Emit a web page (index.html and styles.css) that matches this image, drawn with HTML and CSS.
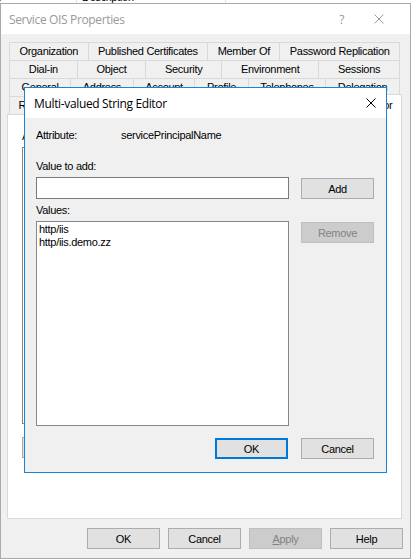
FILE: index.html
```html
<!DOCTYPE html>
<html>
<head>
    <title>Service OIS Properties</title>
    <link rel="stylesheet" href="styles.css">
</head>
<body>
    <!-- list view of the window behind, mostly covered -->
    <div class="behind">
        <div class="behind-cell first"><span>c</span></div>
        <div class="behind-cell second"><span>Description</span></div>
    </div>

    <div class="window">
        <div class="titlebar">
            <span class="title">Service OIS Properties</span>
            <span class="title-help">?</span>
            <svg class="title-close" width="10" height="10" viewBox="0 0 10 10">
                <path d="M0.5 0.5 L9.5 9.5 M9.5 0.5 L0.5 9.5" stroke="#9a9a9a" stroke-width="1" fill="none"/>
            </svg>
        </div>

        <div class="sheet">
            <div class="tab-row">
                <div class="tab">Organization</div>
                <div class="tab">Published Certificates</div>
                <div class="tab">Member Of</div>
                <div class="tab">Password Replication</div>
            </div>
            <div class="tab-row">
                <div class="tab">Dial-in</div>
                <div class="tab">Object</div>
                <div class="tab">Security</div>
                <div class="tab">Environment</div>
                <div class="tab">Sessions</div>
            </div>
            <div class="tab-row">
                <div class="tab">General</div>
                <div class="tab">Address</div>
                <div class="tab">Account</div>
                <div class="tab">Profile</div>
                <div class="tab">Telephones</div>
                <div class="tab">Delegation</div>
            </div>
            <div class="tab-row">
                <div class="tab">Remote control</div>
                <div class="tab">Remote Desktop Services Profile</div>
                <div class="tab">COM+</div>
                <div class="tab selected">Attribute Editor</div>
            </div>

            <div class="page">
                <div class="page-label">Attributes:</div>
                <div class="attr-grid"></div>
                <button class="btn page-btn">Edit</button>
            </div>
        </div>

        <div class="footer">
            <button class="btn">OK</button>
            <button class="btn">Cancel</button>
            <button class="btn" disabled><u>A</u>pply</button>
            <button class="btn">Help</button>
        </div>
    </div>

    <!-- the editor dialog sits on top of the properties window -->
    <div class="editor">
        <div class="editor-title">
            <span>Multi-valued String Editor</span>
            <svg class="editor-close" width="10" height="10" viewBox="0 0 10 10">
                <path d="M0.5 0.5 L9.5 9.5 M9.5 0.5 L0.5 9.5" stroke="#000" stroke-width="1" fill="none"/>
            </svg>
        </div>
        <div class="editor-body">
            <div class="attr-row">
                <span class="attr-label">Attribute:</span>
                <span>servicePrincipalName</span>
            </div>

            <label for="valueToAdd" class="field-label first-field">Value to add:</label>
            <div class="field-row">
                <input type="text" id="valueToAdd" class="text-input">
                <button class="btn">Add</button>
            </div>

            <div class="field-label">Values:</div>
            <div class="field-row">
                <ul class="values-list">
                    <li>http/iis</li>
                    <li>http/iis.demo.zz</li>
                </ul>
                <button class="btn" disabled>Remove</button>
            </div>

            <div class="editor-footer">
                <button class="btn default">OK</button>
                <button class="btn">Cancel</button>
            </div>
        </div>
    </div>
</body>
</html>
```

FILE: styles.css
```css
body {
    margin: 0;
    width: 413px;
    height: 560px;
    overflow: hidden;
    position: relative;
    background-color: #fff;
    font-family: "Liberation Sans", Arial, sans-serif;
    font-size: 11px;
    letter-spacing: -0.3px;
    color: #000;
}

.behind {
    display: flex;
    height: 3px;
    overflow: hidden;
}

.behind-cell {
    height: 3px;
    border-right: 1px solid #e5e5e5;
}

.behind-cell span {
    display: block;
    margin-top: -9px;
    line-height: 13px;
}

.behind-cell.first {
    width: 76px;
}

.behind-cell.first span {
    margin-left: -4px;
}

.behind-cell.second {
    width: 149px;
    padding-left: 5px;
    box-sizing: border-box;
}

.window {
    width: 411px;
    height: 556px;
    box-sizing: border-box;
    border: 1px solid #aaaaaa;
    background-color: #f0f0f0;
}

.titlebar {
    display: flex;
    align-items: center;
    height: 30px;
    padding-left: 8px;
    background-color: #fff;
    font-family: "Open Sans", "Noto Sans", sans-serif;
    font-size: 12px;
    letter-spacing: -0.35px;
    color: #999;
}

.title-help {
    margin-left: auto;
}

.title-close {
    margin-left: 30px;
    margin-right: 26px;
}

.sheet {
    padding: 8px 8px 0 6px;
}

.tab-row {
    display: flex;
    height: 18px;
    margin: 0 2px;
}

.tab {
    flex: 1 1 auto;
    border-top: 1px solid #d9d9d9;
    border-left: 1px solid #d9d9d9;
    text-align: center;
    line-height: 17px;
    white-space: nowrap;
    overflow: hidden;
}

.tab:last-child {
    border-right: 1px solid #d9d9d9;
}

.tab.selected {
    height: 20px;
    margin: -2px -2px -1px -2px;
    line-height: 21px;
    background-color: #fff;
    position: relative;
    z-index: 1;
}

.page {
    height: 405px;
    box-sizing: border-box;
    border: 1px solid #d9d9d9;
    background-color: #fff;
    padding: 15px 0 0 14px;
}

.page-label {
    line-height: 13px;
}

.attr-grid {
    width: 350px;
    height: 277px;
    margin-top: 4px;
    box-sizing: border-box;
    border: 1px solid #828790;
    background-color: #fff;
}

.btn {
    box-sizing: border-box;
    width: 73px;
    height: 21px;
    padding: 0;
    margin: 0;
    background-color: #e1e1e1;
    border: 1px solid #adadad;
    font-family: inherit;
    font-size: 11px;
    letter-spacing: inherit;
    color: #000;
}

.btn:disabled {
    background-color: #cccccc;
    border-color: #bfbfbf;
    color: #838383;
}

.btn.default {
    border: 2px solid #0078d7;
}

.page-btn {
    width: 75px;
    margin-top: 13px;
}

.footer {
    display: flex;
    justify-content: flex-end;
    gap: 8px;
    padding: 9px 7px 0 0;
}

.editor {
    position: absolute;
    left: 24px;
    top: 87px;
    z-index: 2;
    width: 363px;
    height: 386px;
    box-sizing: border-box;
    border: 1px solid #1883d7;
    background-color: #f0f0f0;
}

.editor-title {
    display: flex;
    align-items: center;
    height: 30px;
    padding-left: 9px;
    background-color: #fff;
    font-family: "Open Sans", "Noto Sans", sans-serif;
    font-size: 12px;
    letter-spacing: -0.35px;
}

.editor-close {
    margin-left: auto;
    margin-right: 10px;
}

.editor-body {
    padding: 11px 12px 0 11px;
}

.attr-row {
    display: flex;
    line-height: 13px;
}

.attr-label {
    width: 85px;
}

.field-label {
    display: block;
    margin-top: 5px;
    line-height: 13px;
}

.field-label.first-field {
    margin-top: 18px;
}

.field-row {
    display: flex;
    align-items: flex-start;
    gap: 12px;
    margin-top: 4px;
}

.field-row .btn {
    margin-top: 1px;
}

.text-input {
    box-sizing: border-box;
    width: 253px;
    height: 22px;
    margin: 0;
    padding: 0 2px;
    border: 1px solid #7a7a7a;
    background-color: #fff;
}

.values-list {
    list-style-type: none;
    box-sizing: border-box;
    width: 253px;
    height: 205px;
    margin: 0;
    padding: 1px 2px;
    border: 1px solid #828790;
    background-color: #fff;
    line-height: 13px;
}

.editor-footer {
    display: flex;
    justify-content: flex-end;
    gap: 13px;
    margin-top: 12px;
}
```
